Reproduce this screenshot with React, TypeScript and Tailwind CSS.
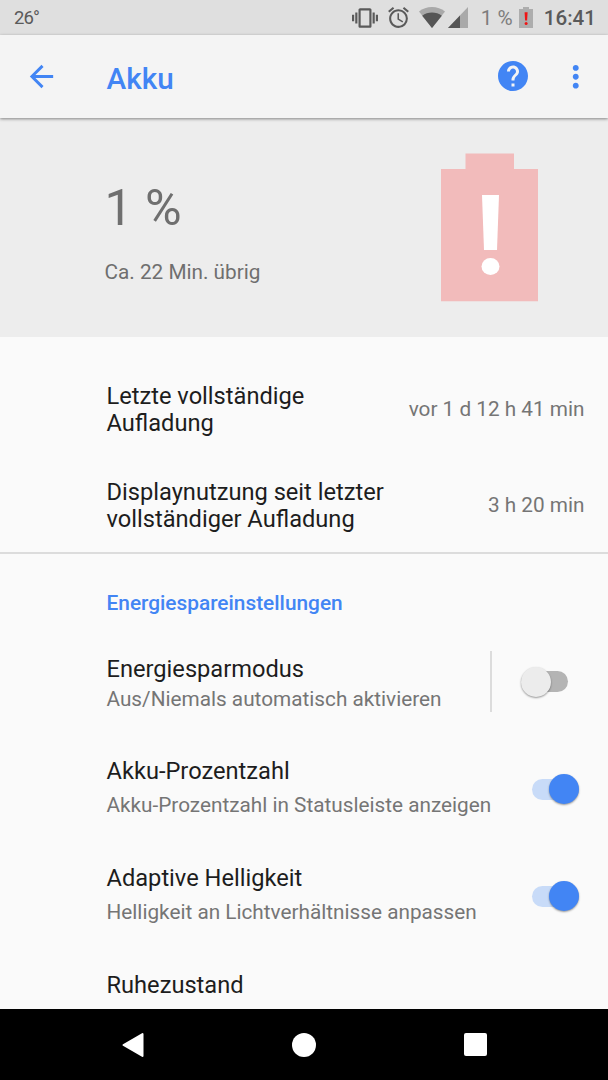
import { useState } from "react";
import { MdAlarm, MdArrowBack, MdHelp, MdMoreVert, MdVibration } from "react-icons/md";

type SwitchProps = {
  checked: boolean;
  onChange: () => void;
  label: string;
};

function Switch({ checked, onChange, label }: SwitchProps) {
  return (
    <button
      role="switch"
      aria-checked={checked}
      aria-label={label}
      onClick={onChange}
      className="relative flex h-[30px] w-[47px] shrink-0 items-center"
    >
      <span
        className={
          checked
            ? "h-[21px] w-full rounded-full bg-[#c8dbf8]"
            : "h-[21px] w-full rounded-full bg-[#b4b4b4]"
        }
      />
      <span
        className={
          checked
            ? "absolute right-0 top-0 size-[30px] rounded-full bg-[#4285f4] shadow-[0_1px_2px_rgba(0,0,0,0.4)]"
            : "absolute left-0 top-0 size-[30px] rounded-full bg-[#ececec] shadow-[0_1px_2px_rgba(0,0,0,0.4)]"
        }
      />
    </button>
  );
}

function StatusBar() {
  return (
    <div className="flex h-[35px] shrink-0 items-center justify-between bg-[#dfdfdf] pl-[14px] pr-[12px] text-[#5a5a5a]">
      <span className="pt-[2px] text-[18.5px] leading-[35px] tracking-[-0.9px]">26°</span>
      <div className="flex items-center">
        <MdVibration className="size-[26px]" />
        <MdAlarm className="ml-[8px] size-[25px]" />
        <svg className="ml-[8px] h-[21px] w-[26px]" viewBox="0 0 26 21">
          <path d="M0 4.6C3.6 1.6 8 0 13 0s9.4 1.6 13 4.6L13 21z" fill="#a9a9a9" />
          <path d="M3.2 8.7C6 6.7 9.3 5.6 13 5.6s7 1.1 9.8 3.1L13 21z" fill="#555" />
        </svg>
        <svg className="ml-[3px] h-[21px] w-[20px]" viewBox="0 0 20 21">
          <path d="M20 0v21H0z" fill="#a9a9a9" />
          <path d="M12 8.4v12.6H0z" fill="#555" />
        </svg>
        <span className="ml-[13px] w-[38px] whitespace-nowrap pt-[2px] text-[20.7px] leading-[35px] text-[#7d7d7d]">
          1 %
        </span>
        <svg className="h-[21px] w-[14px]" viewBox="0 0 14 21">
          <path d="M4 0h6v2h4v19H0V2h4z" fill="#adadad" />
          <path d="M5.6 5.2h3l-.5 8.3h-2z" fill="#f01414" />
          <circle cx="7.1" cy="16.6" r="1.5" fill="#f01414" />
        </svg>
        <span className="ml-[11px] pt-[2px] text-[20.6px] font-medium leading-[35px]">16:41</span>
      </div>
    </div>
  );
}

function AppBar() {
  return (
    <header className="relative z-10 flex h-[83px] shrink-0 items-center bg-[#f4f4f4] pl-[24px] pr-[14.5px] text-[#4285f4] shadow-[0_1px_3px_rgba(0,0,0,0.45)]">
      <button aria-label="Zurück">
        <MdArrowBack className="size-[35px]" />
      </button>
      <h1 className="ml-[47.5px] grow pt-[3px] text-[29.7px] font-medium leading-[35px]">Akku</h1>
      <button aria-label="Hilfe" className="pb-[1px]">
        <MdHelp className="size-[36px]" />
      </button>
      <button aria-label="Mehr" className="ml-[27px]">
        <MdMoreVert className="size-[35.5px]" />
      </button>
    </header>
  );
}

function BatteryHeader() {
  return (
    <section className="flex h-[219px] shrink-0 justify-between bg-[#ededed] pl-[104.5px] pr-[70px] text-[#6f6f6f]">
      <div className="pt-[60px]">
        <p className="text-[50px] leading-[60px]">1 %</p>
        <p className="mt-[22px] text-[20.75px] leading-[24px]">Ca. 22 Min. übrig</p>
      </div>
      <svg className="mt-[35px] h-[149px] w-[97px]" viewBox="0 0 97 149">
        <path d="M24.5.5h48.5v15.5H97v132.3H0V16h24.5z" fill="#f2bbbb" />
        <path d="M41 42h17l-2 55H43z" fill="#fff" />
        <ellipse cx="49.5" cy="113.5" rx="9" ry="8.5" fill="#fff" />
      </svg>
    </section>
  );
}

const stats = [
  { title: "Letzte vollständige Aufladung", value: "vor 1 d 12 h 41 min" },
  { title: "Displaynutzung seit letzter vollständiger Aufladung", value: "3 h 20 min" },
];

export default function App() {
  const [saver, setSaver] = useState(false);
  const [percent, setPercent] = useState(true);
  const [adaptive, setAdaptive] = useState(true);

  return (
    <main className="flex h-[1080px] w-[608px] flex-col overflow-hidden bg-[#fafafa] font-['Roboto',sans-serif] text-[#1d1d1d]">
      <StatusBar />
      <AppBar />
      <BatteryHeader />

      <section className="h-[217px] shrink-0 border-b-2 border-[#dcdcdc] pt-[24px]">
        {stats.map((s) => (
          <div
            key={s.title}
            className="flex h-[96px] items-center justify-between gap-[20px] pl-[106.5px] pr-[23.5px]"
          >
            <p className="max-w-[282px] pt-[2px] text-[23.65px] leading-[27.5px]">{s.title}</p>
            <p className="whitespace-nowrap text-[20.75px] leading-[24px] text-[#757575]">{s.value}</p>
          </div>
        ))}
      </section>

      <section className="min-h-0 grow overflow-hidden">
        <h2 className="h-[77px] pl-[106.5px] pt-[37px] text-[20.85px] font-medium leading-[24px] text-[#4285f4]">
          Energiespareinstellungen
        </h2>

        <div className="flex h-[104px] items-start pl-[106.5px] pt-[25px]">
          <div className="grow">
            <p className="text-[23.65px] leading-[27px]">Energiesparmodus</p>
            <p className="mt-[4px] text-[20.75px] leading-[24px] text-[#757575]">
              Aus/Niemals automatisch aktivieren
            </p>
          </div>
          <div className="-mt-[5px] flex h-[61px] w-[118px] items-center border-l-2 border-[#dcdcdc] pl-[28.5px]">
            <Switch checked={saver} onChange={() => setSaver(!saver)} label="Energiesparmodus" />
          </div>
        </div>

        <div className="flex h-[107px] items-start justify-between pl-[106.5px] pr-[29px] pt-[23px]">
          <div>
            <p className="text-[23.65px] leading-[27px]">Akku-Prozentzahl</p>
            <p className="mt-[8px] text-[20.75px] leading-[24px] text-[#757575]">
              Akku-Prozentzahl in Statusleiste anzeigen
            </p>
          </div>
          <div className="pt-[16px]">
            <Switch checked={percent} onChange={() => setPercent(!percent)} label="Akku-Prozentzahl" />
          </div>
        </div>

        <div className="flex h-[107px] items-start justify-between pl-[106.5px] pr-[29px] pt-[23px]">
          <div>
            <p className="text-[23.65px] leading-[27px]">Adaptive Helligkeit</p>
            <p className="mt-[8px] text-[20.75px] leading-[24px] text-[#757575]">
              Helligkeit an Lichtverhältnisse anpassen
            </p>
          </div>
          <div className="pt-[16px]">
            <Switch checked={adaptive} onChange={() => setAdaptive(!adaptive)} label="Adaptive Helligkeit" />
          </div>
        </div>

        <div className="pl-[106.5px] pt-[23px]">
          <p className="text-[23.65px] leading-[27px]">Ruhezustand</p>
        </div>
      </section>

      <nav className="flex h-[71px] shrink-0 items-center justify-between bg-black pl-[121px] pr-[121.5px]">
        <svg className="h-[26px] w-[24px]" viewBox="0 0 24 26">
          <path d="M2.5 13 21.5 2v22z" fill="#fff" stroke="#fff" strokeWidth="2" strokeLinejoin="round" />
        </svg>
        <span className="-ml-[1px] size-[24px] rounded-full bg-white" />
        <span className="size-[23px] rounded-[2px] bg-white" />
      </nav>
    </main>
  );
}
